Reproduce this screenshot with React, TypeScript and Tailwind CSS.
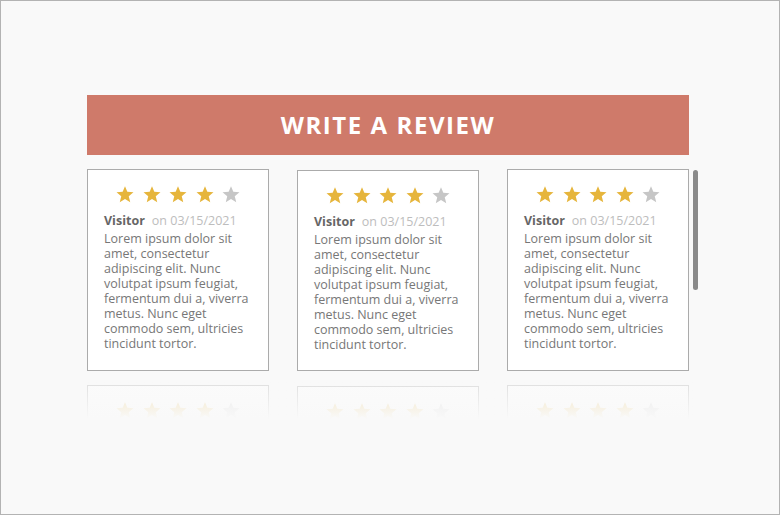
import React from 'react';

const reviews = [
  { name: 'Visitor', date: '03/15/2021', rating: 4 },
  { name: 'Visitor', date: '03/15/2021', rating: 4 },
  { name: 'Visitor', date: '03/15/2021', rating: 4 },
];

const body =
  'Lorem ipsum dolor sit amet, consectetur adipiscing elit. Nunc volutpat ipsum feugiat, fermentum dui a, viverra metus. Nunc eget commodo sem, ultricies tincidunt tortor.';

const Star = ({ on }: { on: boolean }) => (
  <svg viewBox="0 0 24 24" className="h-[18px] w-[18px]">
    <path
      d="M12 1.5l3.1 7.6 8.2.6-6.3 5.3 2 8-7-4.3-7 4.3 2-8L.7 9.7l8.2-.6z"
      fill={on ? '#e6b53c' : '#c6c6c6'}
    />
  </svg>
);

const Stars = ({ rating }: { rating: number }) => (
  <div className="flex justify-center gap-[8.5px]">
    {[0, 1, 2, 3, 4].map((i) => (
      <Star key={i} on={i < rating} />
    ))}
  </div>
);

const ReviewCard = ({ name, date, rating, offset }: { name: string; date: string; rating: number; offset: boolean }) => (
  <div className={`border border-[#ababab] bg-white px-4 pt-[15px] pb-[18px] ${offset ? 'mt-px' : ''}`}>
    <Stars rating={rating} />
    <div className="mt-[9px] flex items-baseline gap-[7px] text-[12.5px] leading-[18px]">
      <span className="font-bold text-[#666]">{name}</span>
      <span className="text-[#bdbdbd]">on {date}</span>
    </div>
    <p className="mt-[1px] text-[12.5px] leading-[15px] text-[#777]">{body}</p>
  </div>
);

// next row, only its top shows before the fade
const PeekCard = ({ rating, offset }: { rating: number; offset: boolean }) => (
  <div className={`h-[80px] border border-[#ababab] bg-white px-4 pt-[15px] ${offset ? 'mt-px' : ''}`}>
    <Stars rating={rating} />
  </div>
);

export default function App() {
  return (
    <div
      className="h-[515px] w-[780px] overflow-hidden border border-[#b3b3b3] bg-[#f9f9f9]"
      style={{ fontFamily: '"Open Sans", "Liberation Sans", sans-serif' }}
    >
      <div className="ml-[86px] mt-[94px] w-[602px]">
        <button className="flex h-[60px] w-full items-center justify-center bg-[#cf7a6a] text-[24px] font-bold tracking-[0.065em] text-white">
          WRITE A REVIEW
        </button>

        <div className="relative mt-[14px] h-[250px] w-[612px] overflow-hidden">
          <div className="grid w-[602px] grid-cols-3 gap-x-[28px] gap-y-[14px]">
            {reviews.map((r, i) => (
              <ReviewCard key={i} {...r} offset={i === 1} />
            ))}
            {reviews.map((r, i) => (
              <PeekCard key={`p${i}`} rating={r.rating} offset={i === 1} />
            ))}
          </div>
          <div className="absolute inset-x-0 top-[206px] h-[44px] bg-gradient-to-b from-[#f9f9f9]/60 to-[#f9f9f9]" />
          <div className="absolute left-[606px] top-px h-[120px] w-[5px] rounded-full bg-[#8a8a8a]" />
        </div>
      </div>
    </div>
  );
}
